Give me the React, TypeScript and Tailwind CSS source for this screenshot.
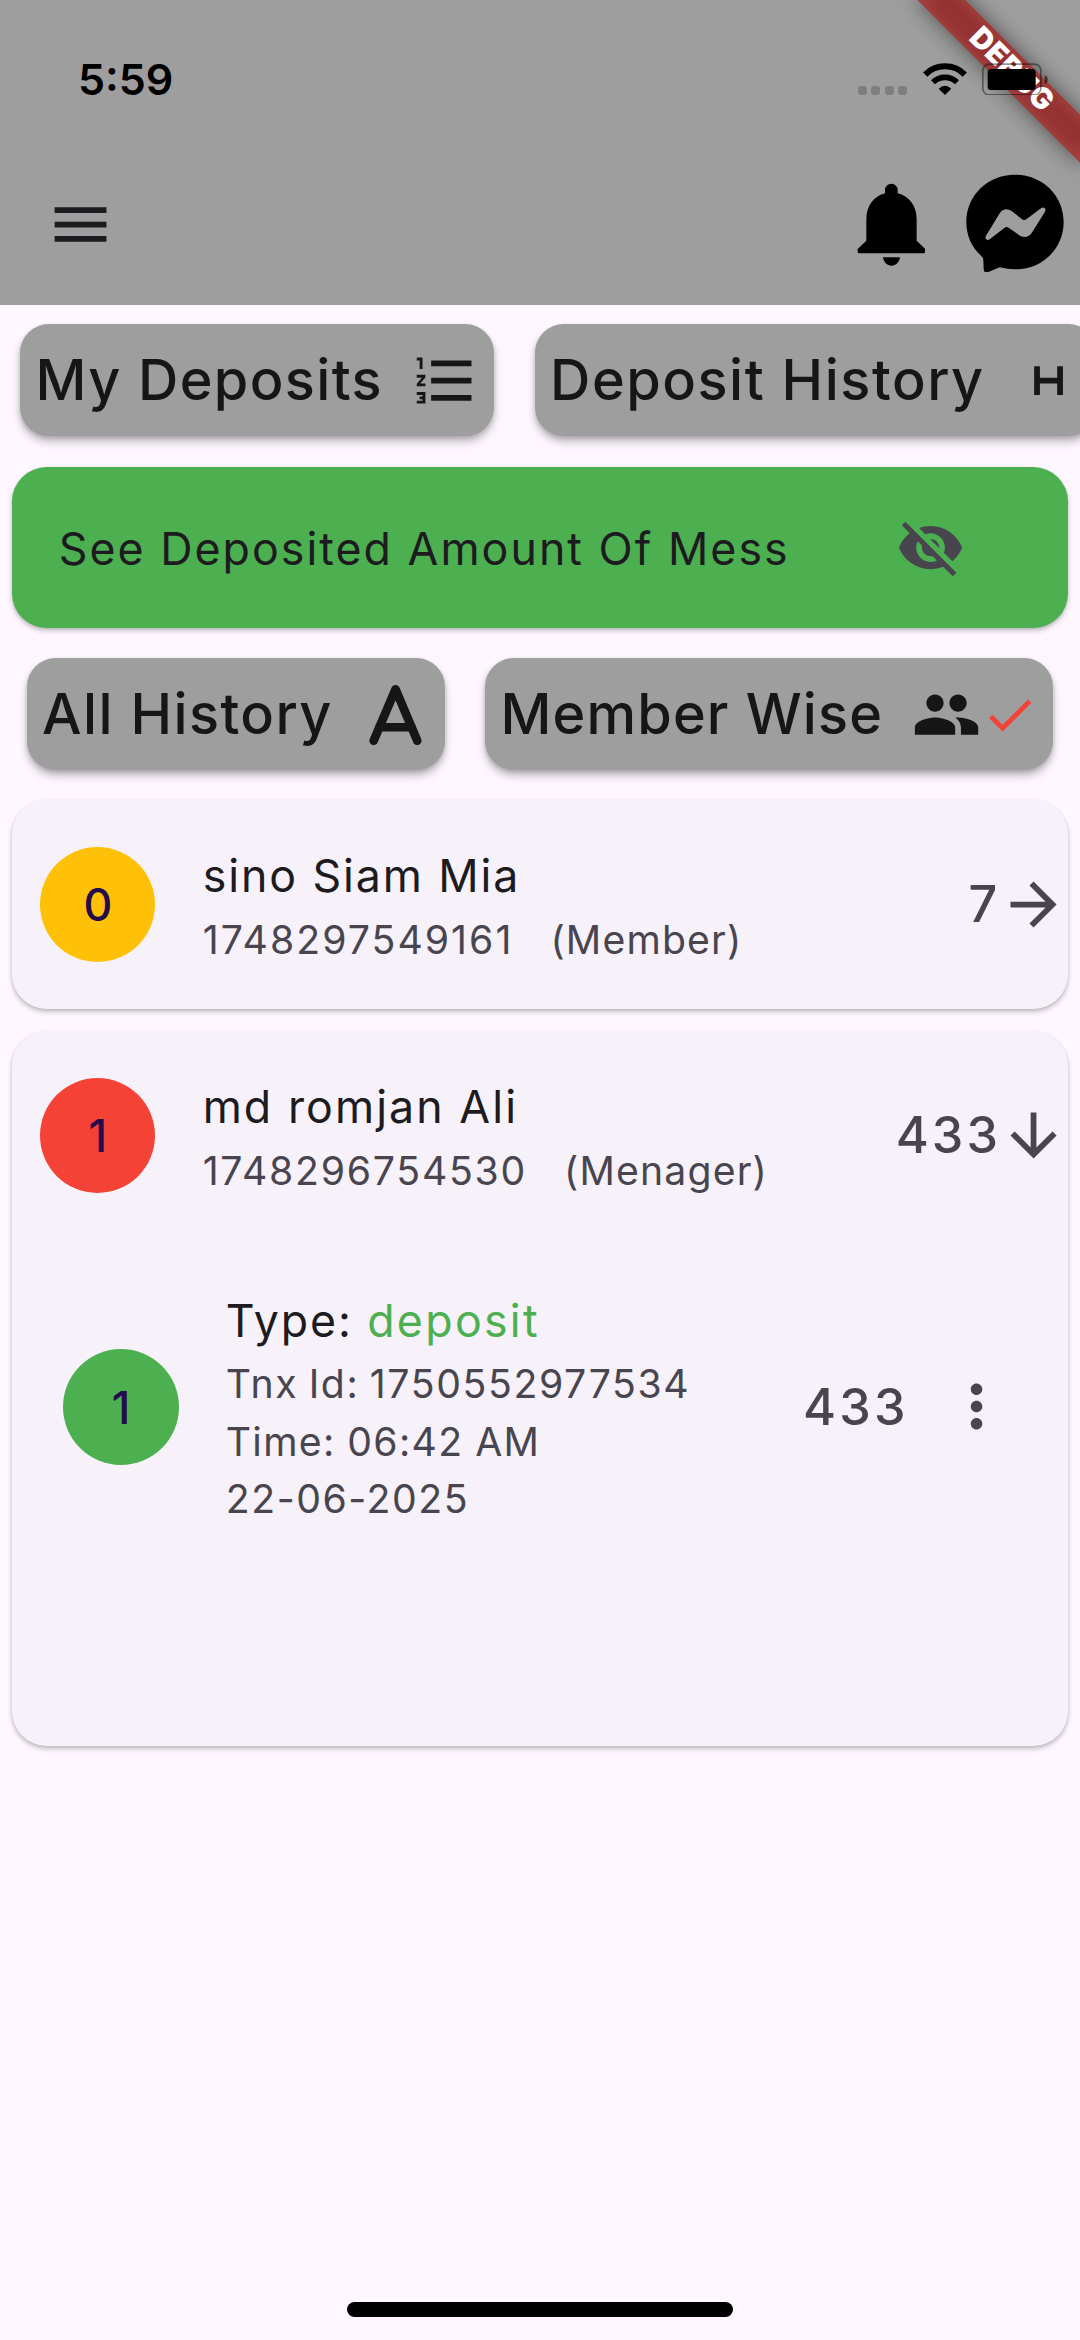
import type { ReactNode } from "react";
import {
  MdArrowDownward,
  MdArrowForward,
  MdCheck,
  MdFormatListNumbered,
  MdMenu,
  MdMoreVert,
  MdPeople,
  MdVisibilityOff,
} from "react-icons/md";

const ICON = "size-[69.1px] shrink-0";

function WifiIcon() {
  return (
    <svg viewBox="245 66 132 96" className="h-8 w-11 shrink-0">
      <g fill="none" stroke="#000">
        <path d="M251.6 100.6a84 84 0 0 1 118.8 0" strokeWidth="18" />
        <path d="M275 124a51 51 0 0 1 72 0" strokeWidth="17" />
      </g>
      <path d="M311 162 292 143q19-17 38 0Z" fill="#000" />
    </svg>
  );
}

function BatteryIcon() {
  return (
    <svg viewBox="424 66 200 98" className="h-[32.7px] w-[66.7px] shrink-0">
      <rect x="426.5" y="69.5" width="174" height="92" rx="19" fill="none" stroke="#000" strokeOpacity=".42" strokeWidth="5" />
      <rect x="441" y="84" width="144" height="63" rx="10" fill="#000" />
      <path d="M612 102q9 4 9 13.5t-9 13.5Z" fill="#000" fillOpacity=".55" />
    </svg>
  );
}

function BellIcon() {
  return (
    <svg viewBox="45 427 216 262" className="h-[87.3px] w-[72px] shrink-0">
      <path d="M135 464V454a19 19 0 0 1 38 0V464C206 472 230 500 230 542V606L255 630V640Q255 644 251 644H57Q53 644 53 640V631L79 606V542C79 500 103 472 135 464Z" />
      <path d="M129 656H180C178 671 168 681 154.5 681S131 671 129 656Z" />
    </svg>
  );
}

function MessengerIcon() {
  return (
    <svg viewBox="378 402 294 296" className="h-[98.7px] w-[98px] shrink-0">
      <path
        fillRule="evenodd"
        d="M525 404C608 404 671 467 671 546S608 688 527 688C510 688 494 686 479 682L445 696Q432 700 431 688L430 660Q430 654 426 650C396 624 379 588 379 546C379 467 442 404 525 404ZM480 518 438 587C433 596 441 603 449 598L493 564Q500 558 507 564L537 585C550 595 566 592 575 579L615 515C620 506 612 499 604 504L559 538Q552 542 545 537L518 515C505 504 489 505 480 518Z"
      />
    </svg>
  );
}

function LetterMarkIcon() {
  return (
    <svg viewBox="0 0 24 24" className={ICON} fill="none" stroke="currentColor" strokeWidth="3" strokeLinecap="round" strokeLinejoin="round">
      <path d="M4.4 21.1 12 3.2 19.55 21.1" />
      <path d="M6.5 16.4h11" />
    </svg>
  );
}

function HMobileIcon() {
  return (
    <svg viewBox="0 0 24 24" className={ICON} fill="none" stroke="currentColor" strokeWidth="2">
      <path d="M8 7v10M16 7v10M8 12h8" />
    </svg>
  );
}

function DebugBanner() {
  return (
    <div className="pointer-events-none absolute top-0 right-0 z-10 size-[220px] overflow-hidden">
      <div className="absolute top-0 left-full h-0 w-0 origin-top-left rotate-45">
        <div className="absolute top-[80.6px] left-[-115.2px] h-[34.6px] w-[230.4px] bg-black/50 blur-[11px]" />
        <div className="absolute top-[80.6px] left-[-115.2px] flex h-[34.6px] w-[230.4px] items-center justify-center bg-[#b71c1c]/63 pb-[3px] pl-[2px] text-[29.4px] leading-none font-black tracking-[0.6px] text-white">
          DEBUG
        </div>
      </div>
    </div>
  );
}

function StatusBar() {
  return (
    <div className="relative z-20 flex h-[144px] items-center pt-[14px] pr-[31px] pl-[78px]">
      <span className="text-[43px] leading-none font-semibold text-black">5:59</span>
      <div className="ml-auto flex items-center gap-[15.7px]">
        <div className="flex gap-[4.4px] pt-[22px]">
          {[0, 1, 2, 3].map((dot) => (
            <span key={dot} className="size-[9px] rounded-[3px] bg-black/20" />
          ))}
        </div>
        <WifiIcon />
        <BatteryIcon />
      </div>
    </div>
  );
}

function Chip({ label, className, children }: { label: string; className: string; children: ReactNode }) {
  return (
    <button
      className={`flex h-[112px] shrink-0 items-center justify-between rounded-[28.8px] bg-[#9e9e9e] pr-[14.4px] pl-[15.6px] text-[55.8px] leading-none font-medium text-[#161616] shadow-[0_6px_9px_rgba(0,0,0,0.24),0_2px_4px_rgba(0,0,0,0.14)] ${className}`}
    >
      <span className="pb-px whitespace-nowrap">{label}</span>
      <span className="flex items-center">{children}</span>
    </button>
  );
}

function Avatar({ value, className }: { value: string; className: string }) {
  return (
    <div className={`flex size-[115.2px] shrink-0 items-center justify-center rounded-full pt-[2px] text-[44.7px] leading-none font-medium text-[#220c4c] ${className}`}>
      {value}
    </div>
  );
}

const CARD = "mx-[11.6px] rounded-[34.6px] bg-[#f7f1f9] shadow-[0_3px_5px_rgba(0,0,0,0.22),0_1px_3px_rgba(0,0,0,0.08)]";

interface MemberRowProps {
  count: string;
  avatarClass: string;
  name: string;
  nameClass: string;
  id: string;
  idClass: string;
  role: string;
  total: ReactNode;
  icon: ReactNode;
}

function MemberRow({ count, avatarClass, name, nameClass, id, idClass, role, total, icon }: MemberRowProps) {
  return (
    <div className="flex h-[209px] items-center pl-[28.7px] whitespace-nowrap">
      <Avatar value={count} className={avatarClass} />
      <div className="ml-[47.2px] pt-px">
        <div className={`text-[44.7px] leading-[69.1px] text-[#1d1b20] ${nameClass}`}>{name}</div>
        <div className="text-[39.2px] leading-[57.6px] text-[#49454f]">
          <span className={idClass}>{id}</span>
          <span className="ml-[37px] tracking-[1.15px]">{role}</span>
        </div>
      </div>
      <div className="ml-auto flex items-center text-[50.3px] leading-none font-medium text-[#49454f]">
        {total}
        {icon}
      </div>
    </div>
  );
}

export default function App() {
  return (
    <div className="relative flex h-[2340px] w-full flex-col overflow-hidden bg-[#fef7ff] font-['Inter','Liberation_Sans',sans-serif]">
      <header className="h-[305px] shrink-0 bg-[#9e9e9e]">
        <DebugBanner />
        <StatusBar />
        <div className="flex h-[161px] items-center pr-4 pl-[46px]">
          <MdMenu className={`${ICON} text-[#1d1b20]`} />
          <div className="ml-auto flex items-center gap-[39px]">
            <BellIcon />
            <div className="-mt-[3px]">
              <MessengerIcon />
            </div>
          </div>
        </div>
      </header>

      <main className="flex flex-col">
        <div className="flex gap-[40.5px] pt-[19.3px] pl-5">
          <Chip label="My Deposits" className="w-[474px] tracking-[1.38px]">
            <MdFormatListNumbered className={ICON} />
          </Chip>
          <Chip label="Deposit History" className="w-[562.6px] tracking-[1.54px]">
            <HMobileIcon />
          </Chip>
        </div>

        <div className="mx-[11.6px] mt-[30.7px] flex h-[161px] items-center rounded-[34.6px] bg-[#4caf50] pr-[103.5px] pl-[47.2px] shadow-[0_3px_5px_rgba(0,0,0,0.22),0_1px_3px_rgba(0,0,0,0.08)]">
          <span className="pt-[3px] text-[44.7px] leading-none tracking-[2.03px] whitespace-nowrap text-[#1d1b20]">
            See Deposited Amount Of Mess
          </span>
          <MdVisibilityOff className={`${ICON} ml-auto text-[#49454f]`} />
        </div>

        <div className="mt-[30.4px] flex gap-[40.3px] pl-[26.5px]">
          <Chip label="All History" className="w-[418.1px] tracking-[1.44px]">
            <LetterMarkIcon />
          </Chip>
          <Chip label="Member Wise" className="w-[568.5px] tracking-[1.17px]">
            <MdPeople className={ICON} />
            <MdCheck className="size-[57.6px] shrink-0 text-[#f44336]" />
          </Chip>
        </div>

        <section className={`${CARD} mt-[29.6px]`}>
          <MemberRow
            count="0"
            avatarClass="bg-[#ffc107]"
            name="sino Siam Mia"
            nameClass="tracking-[1.91px]"
            id="1748297549161"
            idClass="tracking-[2.04px]"
            role="(Member)"
            total={<span className="mr-[2px]">7</span>}
            icon={<MdArrowForward className={ICON} />}
          />
        </section>

        <section className={`${CARD} mt-[22px] h-[715.3px]`}>
          <MemberRow
            count="1"
            avatarClass="bg-[#f44336]"
            name="md romjan Ali"
            nameClass="tracking-[2.07px]"
            id="1748296754530"
            idClass="tracking-[1.75px]"
            role="(Menager)"
            total={<span className="-mr-[2px] tracking-[3.18px]">433</span>}
            icon={<MdArrowDownward className={ICON} />}
          />
          <div className="mt-[46px] flex items-center pr-[57.6px] pl-[51.8px] whitespace-nowrap">
            <Avatar value="1" className="bg-[#4caf50]" />
            <div className="ml-[47.2px] text-[39.2px] leading-[57.6px] text-[#49454f]">
              <div className="relative top-px text-[44.7px] leading-[69.1px] text-[#1d1b20]">
                <span className="tracking-[1.9px]">Type: </span>
                <span className="tracking-[2.3px] text-[#4caf50]">deposit</span>
              </div>
              <div className="tracking-[1.62px] [word-spacing:-2.2px]">Tnx Id: 1750552977534</div>
              <div className="tracking-[1.3px] [word-spacing:-0.5px]">Time: 06:42 AM</div>
              <div className="tracking-[1.55px]">22-06-2025</div>
            </div>
            <div className="ml-auto flex items-center text-[50.3px] leading-none font-medium text-[#49454f]">
              <span className="mr-[33px] tracking-[3.18px]">433</span>
              <MdMoreVert className={ICON} />
            </div>
          </div>
        </section>
      </main>

      <div className="mt-auto mb-[23px] h-[15px] w-[386px] shrink-0 self-center rounded-full bg-black" />
    </div>
  );
}
